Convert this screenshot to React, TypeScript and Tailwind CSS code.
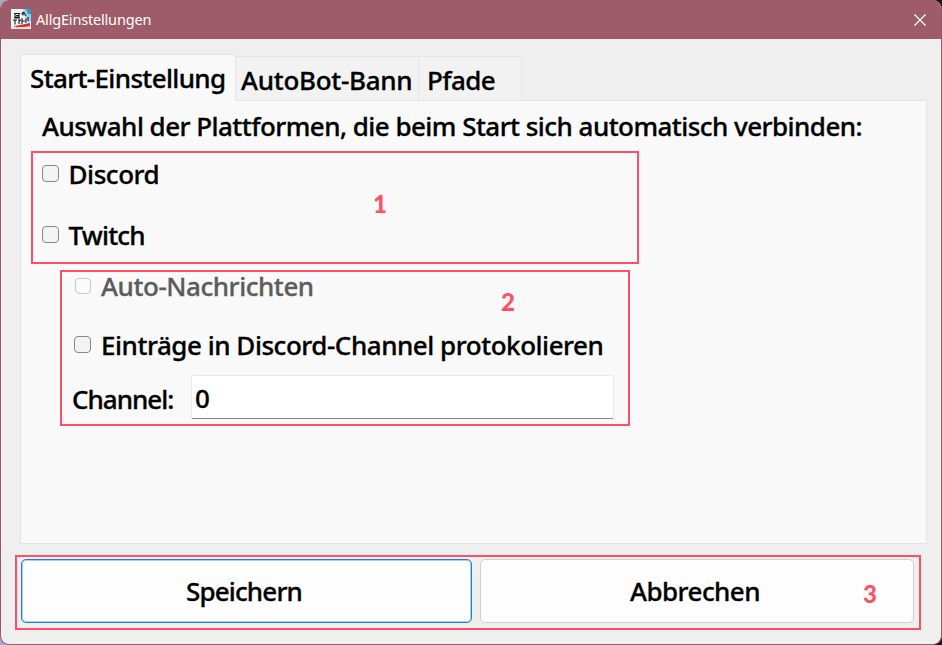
import React from "react";

const label = "block whitespace-nowrap font-medium leading-[36px] text-[26px] [-webkit-text-stroke:0.3px_currentColor]";
const marker = "absolute font-['Lato','Noto_Sans',sans-serif] font-black text-[24px] leading-[36px] text-[#ff4f67]";

function Check({ className = "", disabled = false }: { className?: string; disabled?: boolean }) {
  return (
    <span
      className={`block shrink-0 rounded-[4px] border ${
        disabled ? "size-4 border-[#c8c8c8] bg-[#fbfbfb]" : "size-[17px] border-[#888888] bg-[#f3f3f3]"
      } ${className}`}
    />
  );
}

function AppIcon() {
  return (
    <svg className="mt-[9px] size-5 shrink-0" viewBox="0 0 20 20">
      <rect width="20" height="20" fill="#f4f6f6" />
      <path d="M12 0h8v12l-3 2-2-8z" fill="#8fd0ec" />
      <path d="M15 0h5v5h-3z" fill="#2b9bd0" />
      <path d="M3 4.5h6M4 4v4h4V5M5 6.5h3M3 9h6M12 2.5v4M10.5 5l2.5-1.5 2 4M2 11h4M4 10.500v5M8 10v5M8 12l2-1M11 9v6M11 12h3M15 9v5M17 8v4" stroke="#171b22" strokeWidth="1.1" fill="none" />
      <path d="M3 17l6-1 10-2v3.500l-9 1H3z" fill="#d93030" />
      <path d="M0 18l5-.5v1l15-1V20H0z" fill="#f6dede" />
    </svg>
  );
}

export default function App() {
  return (
    <div className="h-[645px] w-[942px] overflow-hidden bg-[linear-gradient(90deg,#a9a5c5_0%,#a9a5c5_40%,#171717_60%)] font-['Noto_Sans','Open_Sans',sans-serif] text-black">
      <div className="flex h-[645px] flex-col overflow-hidden rounded-[9px] border border-t-0 border-[#9b5866] bg-[#efefef]">
        <header className="flex h-[39px] shrink-0 bg-[#9e5b69] pl-[10px] text-white">
          <AppIcon />
          <span className="ml-[5px] text-[14.5px] leading-[39px] tracking-[-0.18px]">AllgEinstellungen</span>
          <svg className="mr-[15px] ml-auto mt-[14px] size-[12px]" viewBox="0 0 12 12">
            <path d="M.5 .5l11 11M11.5 .5l-11 11" stroke="white" strokeWidth="1.2" />
          </svg>
        </header>

        <div className="ml-[19px] mt-[15px] flex h-[47px] w-[907px] shrink-0 items-end">
          <div className="z-10 h-[47px] w-[216px] border border-b-0 border-[#e5e5e5] bg-[#f9f9f9] pl-[9px] pt-[5px]">
            <span className={`${label} tracking-[-0.65px]`}>Start-Einstellung</span>
          </div>
          <div className="h-[45px] w-[183px] border border-l-0 border-[#e5e5e5] bg-[#f2f2f2] pl-[5px] pt-[5px]">
            <span className={`${label} tracking-[-0.3px]`}>AutoBot-Bann</span>
          </div>
          <div className="h-[45px] w-[103px] border border-l-0 border-[#e5e5e5] bg-[#f2f2f2] pl-2 pt-[5px]">
            <span className={`${label} tracking-[-0.6px]`}>Pfade</span>
          </div>
        </div>
        <main className="-mt-px ml-[19px] h-[444px] w-[907px] shrink-0 border border-[#e5e5e5] bg-[#f9f9f9] pl-[10px] pt-[7px]">
          <h1 className={`${label} ml-[11px] tracking-[-0.54px]`}>Auswahl der Plattformen, die beim Start sich automatisch verbinden:</h1>
          <section className="relative mt-[7px] h-[113px] w-[608px] border-2 border-[#ff4f67] pl-[9px] pt-[3px]">
            <div className="flex h-9">
              <Check className="mt-[9px]" />
              <span className={`${label} ml-[9.5px] tracking-[-0.45px]`}>Discord</span>
            </div>
            <div className="mt-[25px] flex h-9">
              <Check className="mt-[9px]" />
              <span className={`${label} ml-[9.5px] tracking-[-0.8px]`}>Twitch</span>
            </div>
            <b className={`${marker} left-[340px] top-[33px]`}>1</b>
          </section>
          <section className="relative ml-[29px] mt-[6px] h-[156px] w-[570px] border-2 border-[#ff4f67] pl-[10px]">
            <div className="-mt-[4px] flex h-9 pl-[3px]">
              <Check disabled className="mt-[10px]" />
              <span className={`${label} ml-[10px] tracking-[-0.45px] text-[#5c5c5c]`}>Auto-Nachrichten</span>
            </div>
            <div className="mt-[23px] flex h-9 pl-[2px]">
              <Check className="mt-[9px]" />
              <span className={`${label} ml-[10px] tracking-[-0.47px]`}>Einträge in Discord-Channel protokolieren</span>
            </div>
            <div className="mt-[12px] flex h-[44px]">
              <label className={`${label} w-[119px] pt-[6px] tracking-[-1px]`}>Channel:</label>
              <div className="h-[44px] w-[423px] rounded-[2px] border border-[#eaeaea] border-b-[#858585] bg-white pl-[3px] pt-[4px]">
                <span className={label}>0</span>
              </div>
            </div>
            <b className={`${marker} left-[439px] top-[12px]`}>2</b>
          </section>
        </main>
        <footer className="relative ml-[14px] mt-[11px] flex h-[75px] w-[906px] shrink-0 gap-2 border-2 border-[#ff4f67] pl-1 pt-[2px]">
          <div className="flex h-[64px] w-[451px] justify-center rounded-[5px] border border-[#1e80d0] bg-[#fdfdfd] pr-[5px] pt-[13px] shadow-[inset_0_0_0_1px_#a8d0f0]">
            <span className={`${label} tracking-[-0.85px]`}>Speichern</span>
          </div>
          <div className="flex h-[64px] w-[434px] justify-center rounded-[5px] border border-[#d0d0d0] bg-[#fdfdfd] pr-[4px] pt-[13px]">
            <span className={`${label} tracking-[-0.55px]`}>Abbrechen</span>
          </div>
          <b className={`${marker} left-[846px] top-[19px]`}>3</b>
        </footer>
      </div>
    </div>
  );
}
